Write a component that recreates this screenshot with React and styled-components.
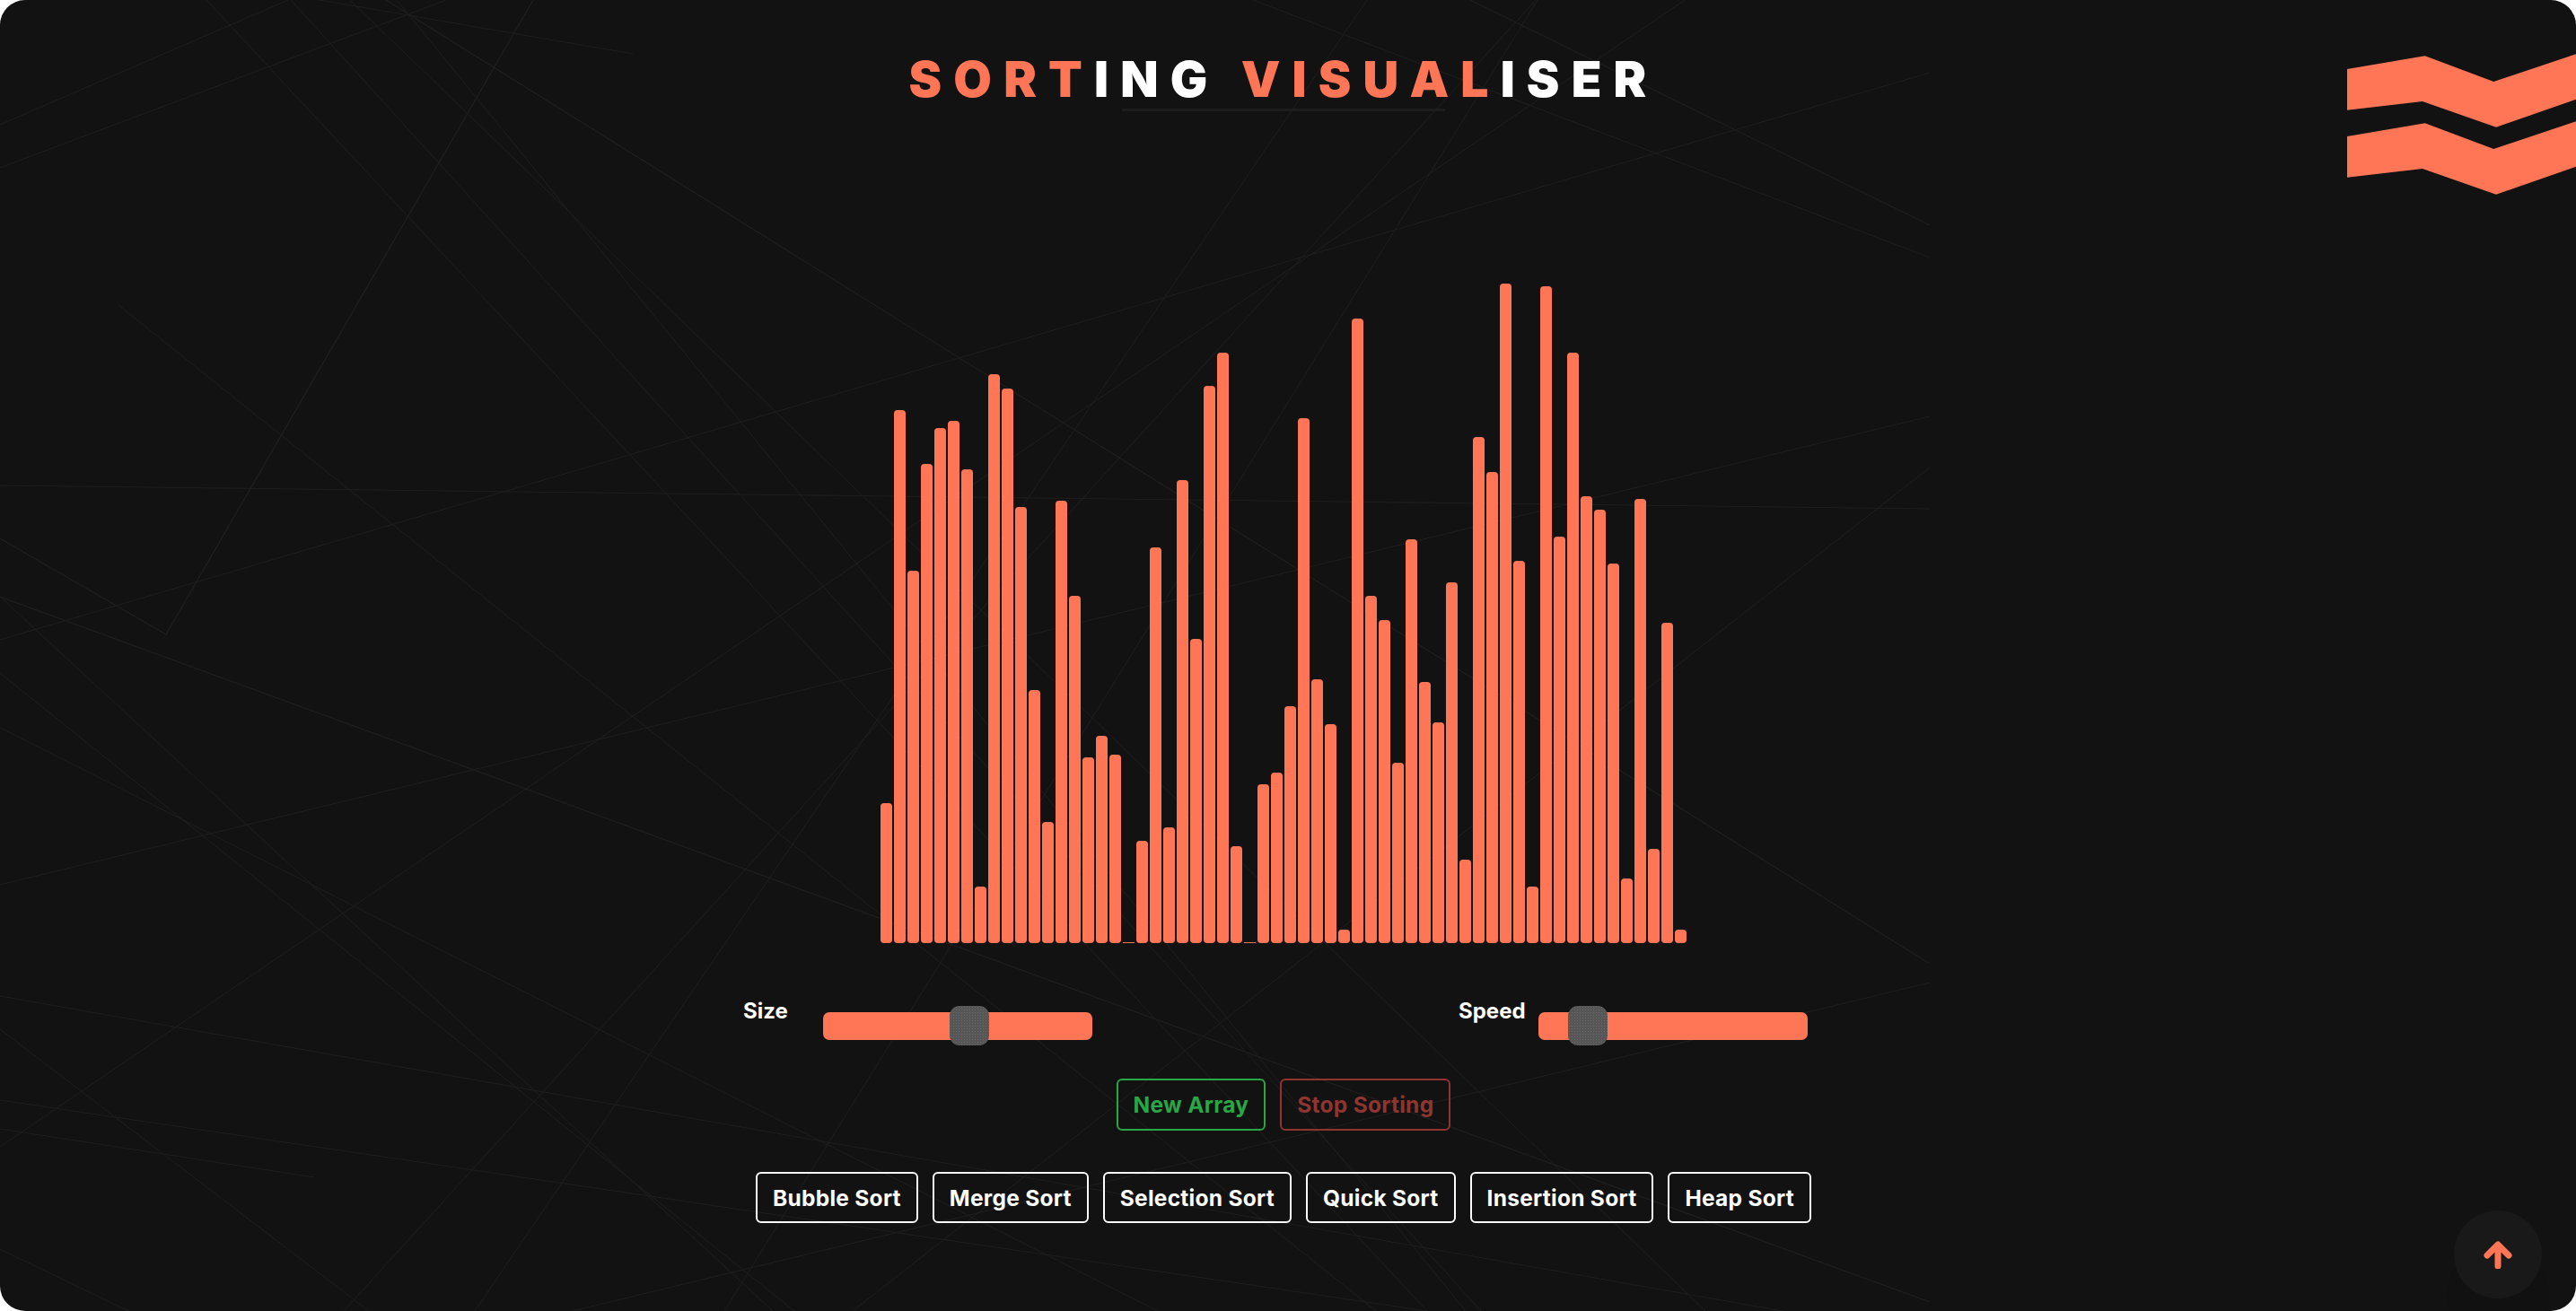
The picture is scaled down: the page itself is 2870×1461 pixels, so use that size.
import React from "react";
import styled, { createGlobalStyle } from "styled-components";

const CORAL = "#ff7657";

const Global = createGlobalStyle`
  html, body { margin: 0; padding: 0; background: #ffffff; }
  body { font-family: "Inter", "Liberation Sans", sans-serif; }
`;

const Page = styled.div`
  position: relative;
  width: 2870px;
  height: 1461px;
  overflow: hidden;
  border-radius: 28px;
  background: #121212;
`;

const Backdrop = styled.svg`
  position: absolute;
  left: 0;
  top: 0;
  width: 2150px;
  height: 1461px;
`;

const Column = styled.main`
  position: relative;
  display: flex;
  flex-direction: column;
  align-items: center;
  padding-right: 10px;
`;

const Header = styled.header`
  display: flex;
  flex-direction: column;
  align-items: center;
  height: 124px;
  width: 100%;
`;

const Title = styled.h1`
  margin: 58px 0 0;
  font-family: "Inter", "Liberation Sans", sans-serif;
  font-weight: 900;
  font-size: 55px;
  line-height: 60px;
  letter-spacing: 13.2px;
  color: #ffffff;
  white-space: pre;
`;

const Accent = styled.span`
  color: ${CORAL};
`;

const Rule = styled.div`
  width: 360px;
  height: 3px;
  background: #1d1d1d;
  margin-top: 3px;
`;

const Chart = styled.section`
  display: flex;
  align-items: flex-end;
  width: 900px;
  height: 750px;
  margin-top: 177px;
`;

const Bar = styled.div`
  width: 13px;
  margin: 0 1px;
  background: ${CORAL};
  border-radius: ${(p) => (p.$flat ? "0" : "4px")};
`;

const Sliders = styled.section`
  display: flex;
  gap: 408px;
  margin-top: 61px;
  padding-right: 18px;
`;

const SliderGroup = styled.div`
  display: flex;
  align-items: flex-start;
`;

const SliderLabel = styled.label`
  width: 89px;
  font-size: 24px;
  line-height: 29px;
  font-weight: 700;
  color: #ffffff;
`;

const Track = styled.div`
  position: relative;
  width: 300px;
  height: 31px;
  margin-top: 16px;
  border-radius: 7px;
  background: ${CORAL};
`;

const Thumb = styled.div`
  position: absolute;
  top: -7px;
  width: 44px;
  height: 44px;
  border-radius: 11px;
  background-color: #565656;
  background-image: radial-gradient(#6a6a6a 0.5px, transparent 0.8px);
  background-size: 3px 3px;
`;

const ButtonRow = styled.div`
  display: flex;
  gap: 16px;
  margin-top: ${(p) => p.$top}px;
`;

const Button = styled.button`
  box-sizing: border-box;
  height: ${(p) => p.$height}px;
  padding: 0 17px;
  border: 2px solid ${(p) => p.$color};
  border-radius: 6px;
  background: transparent;
  color: ${(p) => p.$color};
  font-family: "Inter", "Liberation Sans", sans-serif;
  font-size: 24.5px;
  font-weight: 700;
  letter-spacing: 0.27px;
  white-space: nowrap;
`;

const Logo = styled.svg`
  position: absolute;
  right: 0;
  top: 60px;
  width: 255px;
  height: 157px;
`;

const UpButton = styled.button`
  position: absolute;
  left: 2734px;
  top: 1349px;
  width: 98px;
  height: 98px;
  padding: 0;
  border: none;
  border-radius: 50%;
  background: #191919;
  display: flex;
  align-items: center;
  justify-content: center;
  box-shadow: 0 47px 0 8px #111111;
`;

const ArrowIcon = styled.svg`
  width: 32px;
  height: 31px;
`;

const heights = [
  156, 594, 415, 534, 574, 582, 528, 63, 634, 618, 486, 282, 135, 493, 387, 207, 231, 210, 1, 114,
  441, 129, 516, 339, 621, 658, 108, 1, 177, 190, 264, 585, 294, 244, 15, 696, 387, 360, 201, 450,
  291, 246, 402, 93, 564, 525, 735, 426, 63, 732, 453, 658, 498, 483, 423, 72, 495, 105, 357, 15,
];

const lines = [
  [594, 0, 185, 707, 1.4], [185, 707, 0, 600, 1.4], [0, 139, 321, 0], [0, 187, 497, 0],
  [356, 0, 705, 60], [230, 0, 1590, 1461], [324, 0, 1650, 1461], [390, 0, 1900, 1461],
  [442, 0, 1633, 1461], [430, 0, 2150, 1074, 1.2], [132, 340, 1533, 1461], [0, 541, 2150, 567],
  [0, 713, 2150, 81], [0, 665, 2150, 1451, 1.2], [1877, 0, 0, 1278], [1711, 0, 383, 1461],
  [1523, 0, 529, 1461], [1713, 0, 807, 1461], [1638, 0, 2150, 251, 1.2], [1396, 0, 2150, 287],
  [2150, 521, 950, 1461], [0, 986, 2150, 464], [0, 811, 1290, 1461], [0, 750, 885, 1461],
  [0, 665, 861, 1461], [0, 1110, 2150, 1490], [0, 1226, 1590, 1461], [0, 1258, 350, 1312],
  [0, 1147, 411, 1461], [0, 1392, 143, 1461], [638, 1461, 2150, 1095],
];

const chevron = "M0 17 L86.7 2.3 L163.3 31 L255 0.3 L255 50.7 L166 81.7 L84 53 L0 62.7 Z";

const sortNames = ["Bubble Sort", "Merge Sort", "Selection Sort", "Quick Sort", "Insertion Sort", "Heap Sort"];

export default function App() {
  return (
    <Page>
      <Global />
      <Backdrop viewBox="0 0 2150 1461" aria-hidden="true">
        {lines.map(([x1, y1, x2, y2, w], i) => (
          <line key={i} x1={x1} y1={y1} x2={x2} y2={y2} stroke="#1f1f1f" strokeWidth={w || 1} />
        ))}
      </Backdrop>
      <Column>
        <Header>
          <Title>
            <Accent>SORT</Accent>ING <Accent>VISUAL</Accent>ISER
          </Title>
          <Rule />
        </Header>
        <Chart>
          {heights.map((h, i) => (
            <Bar key={i} $flat={h < 2} style={{ height: h }} />
          ))}
        </Chart>
        <Sliders>
          <SliderGroup>
            <SliderLabel>Size</SliderLabel>
            <Track>
              <Thumb style={{ left: 141 }} />
            </Track>
          </SliderGroup>
          <SliderGroup>
            <SliderLabel>Speed</SliderLabel>
            <Track>
              <Thumb style={{ left: 33 }} />
            </Track>
          </SliderGroup>
        </Sliders>
        <ButtonRow $top={43}>
          <Button $color="#28a745" $height={58}>New Array</Button>
          <Button $color="#8f3530" $height={58}>Stop Sorting</Button>
        </ButtonRow>
        <ButtonRow $top={46}>
          {sortNames.map((n) => (
            <Button key={n} $color="#ffffff" $height={57}>{n}</Button>
          ))}
        </ButtonRow>
      </Column>
      <Logo viewBox="0 0 255 157" aria-hidden="true">
        <path d={chevron} fill={CORAL} />
        <path d={chevron} fill={CORAL} transform="translate(0 75)" />
      </Logo>
      <UpButton aria-label="Back to top">
        <ArrowIcon viewBox="0 0 32 31" aria-hidden="true">
          <path d="M16 28 V5 M4 16 L16 4 L28 16" fill="none" stroke={CORAL} strokeWidth="7" strokeLinecap="round" strokeLinejoin="round" />
        </ArrowIcon>
      </UpButton>
    </Page>
  );
}
